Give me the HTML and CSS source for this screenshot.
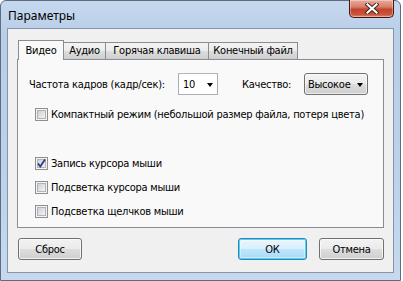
FILE: index.html
```html
<!DOCTYPE html>
<html>
<head>
<meta charset="utf-8">
<link rel="stylesheet" href="styles.css">
</head>
<body>
<div class="window">
  <div class="titlebar">
    <span class="title">Параметры</span>
    <div class="close">
      <svg width="14" height="11" viewBox="0 0 14 11">
        <path d="M2.5 1.5 L11.5 9.5 M11.5 1.5 L2.5 9.5" stroke="#3a2020" stroke-width="4" stroke-linecap="square"/>
        <path d="M2.5 1.5 L11.5 9.5 M11.5 1.5 L2.5 9.5" stroke="#ffffff" stroke-width="2.2" stroke-linecap="square"/>
      </svg>
    </div>
  </div>
  <div class="client">
    <div class="tabs">
      <div class="tab tab-video active">Видео</div>
      <div class="tab tab-audio">Аудио</div>
      <div class="tab tab-hotkey">Горячая клавиша</div>
      <div class="tab tab-file">Конечный файл</div>
    </div>
    <div class="panel">
      <div class="row-fps">
        <span class="lbl lbl-fps">Частота кадров (кадр/сек):</span>
        <div class="combo combo-fps"><span>10</span><i class="arrow"></i></div>
        <span class="lbl lbl-q">Качество:</span>
        <div class="combo combo-q"><span>Высокое</span><i class="arrow"></i></div>
      </div>
      <div class="check check-compact"><span class="box"><span class="inner"></span></span><span>Компактный режим (небольшой размер файла, потеря цвета)</span></div>
      <div class="check check-rec"><span class="box"><span class="inner"></span>
        <svg class="tick" width="11" height="11" viewBox="0 0 11 11"><path d="M2 5.5 L4.3 8.5 L9 1.5" fill="none" stroke="#2d3c8a" stroke-width="1.8"/></svg></span><span>Запись курсора мыши</span></div>
      <div class="check"><span class="box"><span class="inner"></span></span><span>Подсветка курсора мыши</span></div>
      <div class="check"><span class="box"><span class="inner"></span></span><span>Подсветка щелчков мыши</span></div>
    </div>
    <div class="buttons">
      <div class="btn btn-reset">Сброс</div>
      <div class="btn btn-ok">ОК</div>
      <div class="btn btn-cancel">Отмена</div>
    </div>
  </div>
</div>
</body>
</html>
```

FILE: styles.css
```css
html, body {
  margin: 0;
  padding: 0;
  background: #ffffff;
}
body {
  width: 403px;
  height: 281px;
  overflow: hidden;
  font-family: "DejaVu Sans Condensed", "DejaVu Sans", sans-serif;
  font-size: 11px;
  letter-spacing: -0.25px;
  color: #000;
}
.window {
  width: 399px;
  height: 279px;
  border: 1px solid #5e6c80;
  border-radius: 6px 6px 0 0;
  background: linear-gradient(180deg, #c5d8ee 0%, #b9cfe8 12%, #bcd2ea 60%, #c6d9ee 100%);
  display: flex;
  flex-direction: column;
  box-sizing: content-box;
}
.titlebar {
  height: 27px;
  display: flex;
  align-items: flex-start;
  justify-content: space-between;
}
.title {
  font-family: "Noto Sans", "DejaVu Sans", sans-serif;
  font-size: 12px;
  letter-spacing: 0;
  margin: 6px 0 0 7px;
  line-height: 17px;
}
.close {
  width: 43px;
  height: 17px;
  margin-right: 6px;
  margin-top: -1px;
  border: 1px solid #4a1410;
  border-top: none;
  border-radius: 0 0 5px 5px;
  background: linear-gradient(180deg, #e9a99b 0%, #d7806c 40%, #c3432c 55%, #c9543a 85%, #e08a6a 100%);
  box-shadow: inset 0 0 0 1px rgba(255,255,255,0.35);
  display: flex;
  align-items: center;
  justify-content: center;
}
.client {
  margin: 0 6px 7px 6px;
  flex: 1;
  border: 1px solid #8496ad;
  background: #f0f0f0;
  display: flex;
  flex-direction: column;
  padding: 11px 9px 0 9px;
}
.tabs {
  display: flex;
  align-items: flex-end;
  height: 19px;
  padding-left: 1px;
  position: relative;
  z-index: 1;
}
.tab {
  height: 17px;
  line-height: 16px;
  box-sizing: border-box;
  border: 1px solid #898c95;
  border-bottom: none;
  border-left: none;
  background: linear-gradient(180deg, #f3f3f3 0%, #ebebeb 50%, #dddddd 51%, #cfcfcf 100%);
  text-align: center;
  white-space: nowrap;
}
.tab-video {
  width: 46px;
  height: 20px;
  margin-bottom: -1px;
  border-left: 1px solid #898c95;
  background: #f9f9f9;
  line-height: 19px;
}
.tab-audio { width: 42px; }
.tab-hotkey { width: 103px; }
.tab-file { width: 89px; }
.panel {
  height: 169px;
  box-sizing: border-box;
  border: 1px solid #898c95;
  background: #f9f9f9;
  padding: 13px 0 0 11px;
}
.row-fps {
  display: flex;
  align-items: center;
  height: 22px;
}
.lbl-fps { width: 149px; }
.lbl-q { width: 62px; margin-left: 24px; }
.combo {
  height: 22px;
  box-sizing: border-box;
  display: flex;
  align-items: center;
  justify-content: space-between;
  padding: 0 4px 0 3px;
}
.combo-fps {
  width: 40px;
  border: 1px solid #abadb3;
  border-top-color: #b5b7bd;
  background: #ffffff;
  padding-left: 4px;
}
.combo-q {
  width: 64px;
  border: 1px solid #707070;
  border-radius: 3px;
  background: linear-gradient(180deg, #f2f2f2 0%, #ebebeb 50%, #dddddd 51%, #cfcfcf 100%);
  box-shadow: inset 0 0 0 1px rgba(255,255,255,0.6);
}
.arrow {
  width: 0;
  height: 0;
  border-left: 3.5px solid transparent;
  border-right: 3.5px solid transparent;
  border-top: 4px solid #000;
  margin-top: 1px;
  flex: none;
}
.check {
  display: flex;
  align-items: center;
  height: 16px;
  margin-left: 6px;
  margin-top: 8px;
}
.check-compact { margin-top: 11px; }
.check-rec { margin-top: 33px; }
.box {
  width: 13px;
  height: 13px;
  box-sizing: border-box;
  border: 1px solid #8e8f8f;
  background: #f4f4f4;
  margin-right: 3px;
  position: relative;
  flex: none;
}
.inner {
  position: absolute;
  left: 1px;
  top: 1px;
  width: 9px;
  height: 9px;
  box-sizing: border-box;
  border: 1px solid #b0b4b9;
  background: linear-gradient(135deg, #cbcfd5 0%, #e4e6e9 60%, #f2f3f4 100%);
}
.tick {
  position: absolute;
  left: 0;
  top: 0;
}
.buttons {
  display: flex;
  margin-top: 10px;
  height: 22px;
}
.btn {
  height: 22px;
  box-sizing: border-box;
  border: 1px solid #707070;
  border-radius: 3px;
  background: linear-gradient(180deg, #f2f2f2 0%, #ebebeb 50%, #dddddd 51%, #cfcfcf 100%);
  box-shadow: inset 0 0 0 1px rgba(255,255,255,0.7);
  display: flex;
  align-items: center;
  justify-content: center;
}
.btn-reset { width: 64px; margin-left: 1px; }
.btn-ok {
  width: 69px;
  margin-left: auto;
  border-color: #3c7fb1;
  background: linear-gradient(180deg, #eaf6fd 0%, #d9f0fc 50%, #bee6fd 51%, #a7d9f5 100%);
  box-shadow: inset 0 0 0 1px #48d6f8, inset 0 0 0 2px rgba(255,255,255,0.4);
}
.btn-cancel { width: 65px; margin-left: 12px; margin-right: 0px; }
```
